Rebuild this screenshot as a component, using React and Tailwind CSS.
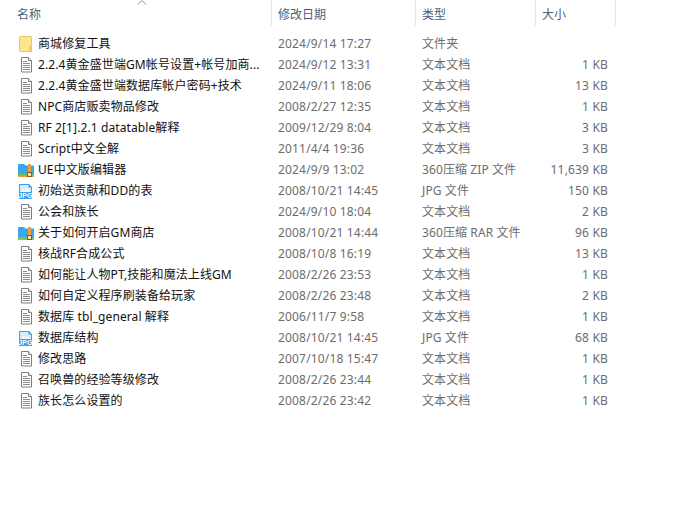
import React from "react";

const FILES = [
  { icon: "folder", name: "商城修复工具", date: "2024/9/14 17:27", type: "文件夹", size: "" },
  { icon: "txt", name: "2.2.4黄金盛世端GM帐号设置+帐号加商...", date: "2024/9/12 13:31", type: "文本文档", size: "1 KB" },
  { icon: "txt", name: "2.2.4黄金盛世端数据库帐户密码+技术", date: "2024/9/11 18:06", type: "文本文档", size: "13 KB" },
  { icon: "txt", name: "NPC商店贩卖物品修改", date: "2008/2/27 12:35", type: "文本文档", size: "1 KB" },
  { icon: "txt", name: "RF 2[1].2.1 datatable解释", date: "2009/12/29 8:04", type: "文本文档", size: "3 KB" },
  { icon: "txt", name: "Script中文全解", date: "2011/4/4 19:36", type: "文本文档", size: "3 KB" },
  { icon: "zip", name: "UE中文版编辑器", date: "2024/9/9 13:02", type: "360压缩 ZIP 文件", size: "11,639 KB" },
  { icon: "jpg", name: "初始送贡献和DD的表", date: "2008/10/21 14:45", type: "JPG 文件", size: "150 KB" },
  { icon: "txt", name: "公会和族长", date: "2024/9/10 18:04", type: "文本文档", size: "2 KB" },
  { icon: "zip", name: "关于如何开启GM商店", date: "2008/10/21 14:44", type: "360压缩 RAR 文件", size: "96 KB" },
  { icon: "txt", name: "核战RF合成公式", date: "2008/10/8 16:19", type: "文本文档", size: "13 KB" },
  { icon: "txt", name: "如何能让人物PT,技能和魔法上线GM", date: "2008/2/26 23:53", type: "文本文档", size: "1 KB" },
  { icon: "txt", name: "如何自定义程序刷装备给玩家", date: "2008/2/26 23:48", type: "文本文档", size: "2 KB" },
  { icon: "txt", name: "数据库 tbl_general 解释", date: "2006/11/7 9:58", type: "文本文档", size: "1 KB" },
  { icon: "jpg", name: "数据库结构", date: "2008/10/21 14:45", type: "JPG 文件", size: "68 KB" },
  { icon: "txt", name: "修改思路", date: "2007/10/18 15:47", type: "文本文档", size: "1 KB" },
  { icon: "txt", name: "召唤兽的经验等级修改", date: "2008/2/26 23:44", type: "文本文档", size: "1 KB" },
  { icon: "txt", name: "族长怎么设置的", date: "2008/2/26 23:42", type: "文本文档", size: "1 KB" },
];

const FolderIcon = () => (
  <svg width="16" height="16" viewBox="0 0 16 16">
    <path d="M2.500 0.500h10a1 1 0 0 1 1 1v14h-11a1 1 0 0 1-1-1v-13a1 1 0 0 1 1-1z" fill="#fde48e" stroke="#eac55f" />
    <path d="M11.500 15.500v-5h2v5z" fill="#f7d36c" stroke="#eac55f" />
  </svg>
);

const TxtIcon = () => (
  <svg width="16" height="16" viewBox="0 0 16 16">
    <path d="M3.500 0.500h7l3 3v11.500h-10z" fill="#fff" stroke="#7f7f7f" />
    <path d="M10.500 0.500v3h3" fill="#eeeeee" stroke="#7f7f7f" />
    <path d="M5 4.500h4M5 6.500h7M5 8.500h7M5 10.500h7M5 12.500h7" stroke="#8c8c8c" />
  </svg>
);

const ZipIcon = () => (
  <svg width="16" height="16" viewBox="0 0 16 16">
    <path d="M0 3a1 1 0 0 1 1-1h5l1.500 1.500H16V15H0z" fill="#38a7ee" />
    <rect x="0" y="12" width="16" height="2" fill="#7cc04a" />
    <rect x="0" y="14" width="16" height="1" fill="#e9a13b" />
    <rect x="10" y="2" width="3" height="10" fill="#e9a13b" />
    <rect x="9.500" y="10.500" width="4" height="4" fill="#f7e3b0" stroke="#8a5a1c" />
  </svg>
);

const JpgIcon = () => (
  <svg width="16" height="16" viewBox="0 0 16 16">
    <path d="M1 1h10l3 3v12H1z" fill="#3b9fec" />
    <path d="M2 2h8.500v2.500H13V9H2z" fill="#d8edfc" />
    <path d="M3 9l2.500-3 2 2 2-2.500L12 9z" fill="#f5fbff" />
    <text x="7.500" y="15.300" textAnchor="middle" fontSize="7" fontWeight="700" fontFamily="Liberation Sans, sans-serif" fill="#fff">JPG</text>
  </svg>
);

const ICONS = { folder: FolderIcon, txt: TxtIcon, zip: ZipIcon, jpg: JpgIcon };

const HeaderCell = ({ label, width }) => (
  <div className={`${width} h-[26px] flex items-center pt-[4px] pl-[6px] border-r border-[#e5e5e5] text-[#4c607a]`}>
    {label}
  </div>
);

export default function App() {
  return (
    <div className="w-[682px] h-[509px] bg-white overflow-hidden text-[12px] font-['Segoe_UI','Noto_Sans','Noto_Sans_CJK_SC',sans-serif]">
      {/* Column headers */}
      <div className="relative flex h-[33px] items-start">
        <svg className="absolute left-[137px] top-0" width="10" height="5" viewBox="0 0 10 5">
          <path d="M1 4.500L5 0.500l4 4" fill="none" stroke="#8a8a8a" />
        </svg>
        <div className="w-[272px] h-[26px] flex items-center pt-[4px] pl-[17px] border-r border-[#e5e5e5] text-[#4c607a]">名称</div>
        <HeaderCell label="修改日期" width="w-[144px]" />
        <HeaderCell label="类型" width="w-[120px]" />
        <HeaderCell label="大小" width="w-[80px]" />
      </div>

      {/* Rows */}
      <div className="flex flex-col">
        {FILES.map((f) => {
          const Icon = ICONS[f.icon];
          return (
            <div key={f.name} className="flex h-[21px] items-center leading-none text-[#6d6d6d] tracking-[0.17px]">
              <div className="w-[272px] shrink-0 flex items-center pl-[18px] tracking-[0.1px]">
                <span className="w-[20px] shrink-0 flex"><Icon /></span>
                <span className="text-[#111111] whitespace-nowrap">{f.name}</span>
              </div>
              <div className="w-[144px] shrink-0 pl-[6px] whitespace-nowrap">{f.date}</div>
              <div className="w-[120px] shrink-0 pl-[6px] whitespace-nowrap tracking-[0.1px]">{f.type}</div>
              <div className="w-[72px] shrink-0 text-right whitespace-nowrap">{f.size}</div>
            </div>
          );
        })}
      </div>
    </div>
  );
}
